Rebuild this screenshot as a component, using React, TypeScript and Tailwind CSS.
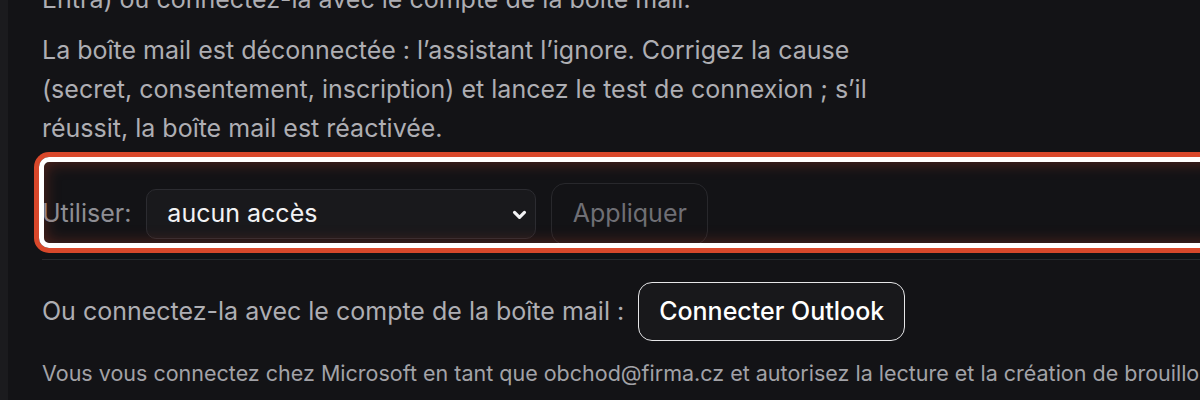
export default function App() {
  return (
    <div className="flex h-[400px] w-full overflow-hidden bg-[#131316] font-['Inter',sans-serif]">
      <div className="w-[8px] shrink-0 bg-[#1b1b1e]" />
      <div className="w-[1500px] shrink-0 pl-[34px]">
        <p className="-mt-[20px] text-[25px] leading-[39px] text-[#aeaeb3]">
          Entra) ou connectez-la avec le compte de la boîte mail.
        </p>
        <p className="mt-[12px] max-w-[870px] text-[25px] leading-[39px] text-[#aeaeb3]">
          La boîte mail est déconnectée : l’assistant l’ignore. Corrigez la cause (secret,
          consentement, inscription) et lancez le test de connexion ; s’il réussit, la boîte mail
          est réactivée.
        </p>

        <div className="relative mt-[14px] flex items-center gap-[15px] border-b border-[#2a2a2e] pt-[21px] pb-[14px]">
          <span className="text-[25px] text-[#8e8e94]">Utiliser:</span>
          <div className="flex h-[50px] w-[390px] items-center justify-between rounded-[10px] border border-[#2c2c31] bg-[#19191c] pr-[7px] pl-[20px]">
            <span className="text-[25px] text-[#f2f2f4]">aucun accès</span>
            <svg width="17" height="17" viewBox="0 0 24 24" fill="none" stroke="#f2f2f4" strokeWidth="4.5" strokeLinecap="round" strokeLinejoin="round">
              <polyline points="5 9 12 16 19 9" />
            </svg>
          </div>
          <button className="h-[62px] w-[157px] rounded-[14px] border border-[#28282c] text-[25px] text-[#6f6f75]">
            Appliquer
          </button>
          <div className="pointer-events-none absolute -top-[5px] -right-[40px] bottom-[11px] -left-[3px] rounded-[10px] border-[5px] border-white ring-[5px] ring-[#d9482b] inset-shadow-[0_0_16px_rgba(217,72,43,0.35)]" />
        </div>

        <div className="border-b border-[#2a2a2e] pt-[22px] pb-[13px]">
          <div className="flex items-center gap-[14px]">
            <span className="text-[25px] text-[#aeaeb3]">Ou connectez-la avec le compte de la boîte mail :</span>
            <button className="h-[59px] w-[267px] rounded-[14px] border-[1.5px] border-[#e6e6e8] bg-[#18181b] text-[25px] font-medium text-white">
              Connecter Outlook
            </button>
          </div>
          <p className="mt-[18px] whitespace-nowrap text-[21.5px] leading-[28px] text-[#a2a2a7]">
            Vous vous connectez chez Microsoft en tant que obchod@firma.cz et autorisez la lecture et la création de brouillons dans cette boîte mail.
          </p>
        </div>
      </div>
    </div>
  );
}
